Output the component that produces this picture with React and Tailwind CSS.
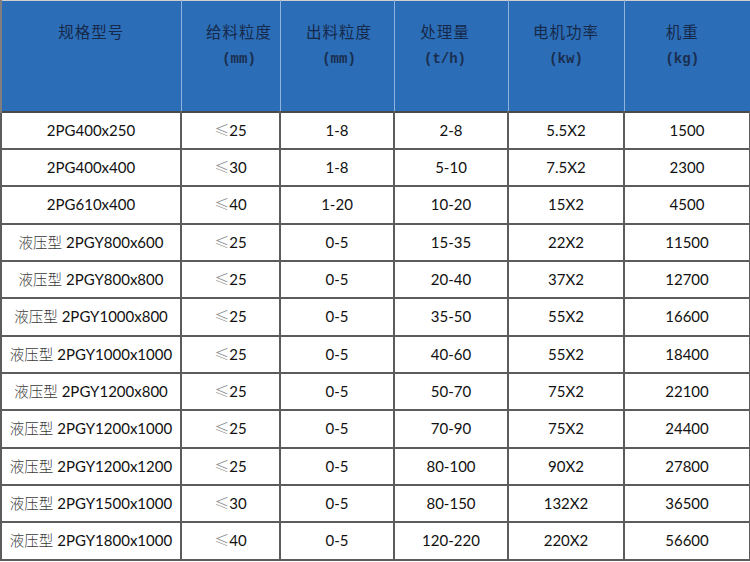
const headers = [
  { title: "规格型号", unit: "", cls: "" },
  { title: "给料粒度", unit: "(mm)", cls: "pl-[17px]" },
  { title: "出料粒度", unit: "(mm)", cls: "pl-[4px]" },
  { title: "处理量", unit: "(t/h)", cls: "pr-[12px]" },
  { title: "电机功率", unit: "(kw)", cls: "" },
  { title: "机重", unit: "(kg)", cls: "pr-[10px]" },
];

const rows = [
  ["", "2PG400x250", "25", "1-8", "2-8", "5.5X2", "1500"],
  ["", "2PG400x400", "30", "1-8", "5-10", "7.5X2", "2300"],
  ["", "2PG610x400", "40", "1-20", "10-20", "15X2", "4500"],
  ["液压型", "2PGY800x600", "25", "0-5", "15-35", "22X2", "11500"],
  ["液压型", "2PGY800x800", "25", "0-5", "20-40", "37X2", "12700"],
  ["液压型", "2PGY1000x800", "25", "0-5", "35-50", "55X2", "16600"],
  ["液压型", "2PGY1000x1000", "25", "0-5", "40-60", "55X2", "18400"],
  ["液压型", "2PGY1200x800", "25", "0-5", "50-70", "75X2", "22100"],
  ["液压型", "2PGY1200x1000", "25", "0-5", "70-90", "75X2", "24400"],
  ["液压型", "2PGY1200x1200", "25", "0-5", "80-100", "90X2", "27800"],
  ["液压型", "2PGY1500x1000", "30", "0-5", "80-150", "132X2", "36500"],
  ["液压型", "2PGY1800x1000", "40", "0-5", "120-220", "220X2", "56600"],
];

// row heights so the lines land on the same pixels as the picture
const heights = ["h-[37px]", "h-[37px]", "h-[38px]"];

const cjk = { fontFamily: '"Noto Sans CJK SC", sans-serif' };

const App = () => {
  return (
    <div className="w-[750px] h-[562px] bg-white overflow-hidden">
      <table
        className="table-fixed border-collapse w-[749px] border-t border-t-[#cfcfcf]"
        style={{ fontFamily: "Lato, 'Noto Sans CJK SC', sans-serif" }}
      >
        <colgroup>
          <col className="w-[180px]" />
          <col className="w-[99px]" />
          <col className="w-[114px]" />
          <col className="w-[114px]" />
          <col className="w-[116px]" />
          <col className="w-[126px]" />
        </colgroup>
        <thead>
          <tr className="h-[111px] bg-[#2b6db6]">
            {headers.map((h, i) => (
              <th
                key={i}
                className={`align-top pt-[17px] font-normal text-[#16294a] text-center leading-[26px] border-l border-l-[#8fb3dd] first:border-l-2 first:border-l-[#7f7f7f] ${h.cls}`}
              >
                <div className="text-[15.5px] tracking-[1px]" style={cjk}>
                  {h.title}
                </div>
                {h.unit && (
                  <div
                    className="text-[14px] font-bold mt-[2px] text-[#1a2d4e]"
                    style={{ fontFamily: '"Liberation Mono", monospace' }}
                  >
                    {h.unit}
                  </div>
                )}
              </th>
            ))}
          </tr>
        </thead>
        <tbody className="text-[15px] text-[#111]">
          {rows.map((r, i) => (
            <tr key={i} className={heights[i % 3]}>
              <td className="text-center border-2 border-[#5c5c5c] border-t-[#4a4a4a] whitespace-nowrap">
                {r[0] && (
                  <span className="text-[14.5px] font-light text-[#3a3a3a] mr-[4px]" style={cjk}>
                    {r[0]}
                  </span>
                )}
                {r[1]}
              </td>
              <td className="text-center border-2 border-[#5c5c5c] border-t-[#4a4a4a]">
                <span className="text-[#8a8a8a] font-light" style={cjk}>
                  ≤
                </span>
                {r[2]}
              </td>
              <td className="text-center border-2 border-[#5c5c5c] border-t-[#4a4a4a]">{r[3]}</td>
              <td className="text-center border-2 border-[#5c5c5c] border-t-[#4a4a4a]">{r[4]}</td>
              <td className="text-center border-2 border-[#5c5c5c] border-t-[#4a4a4a]">{r[5]}</td>
              <td className="text-center border-2 border-[#5c5c5c] border-t-[#4a4a4a]">{r[6]}</td>
            </tr>
          ))}
        </tbody>
      </table>
    </div>
  );
};

export default App;
